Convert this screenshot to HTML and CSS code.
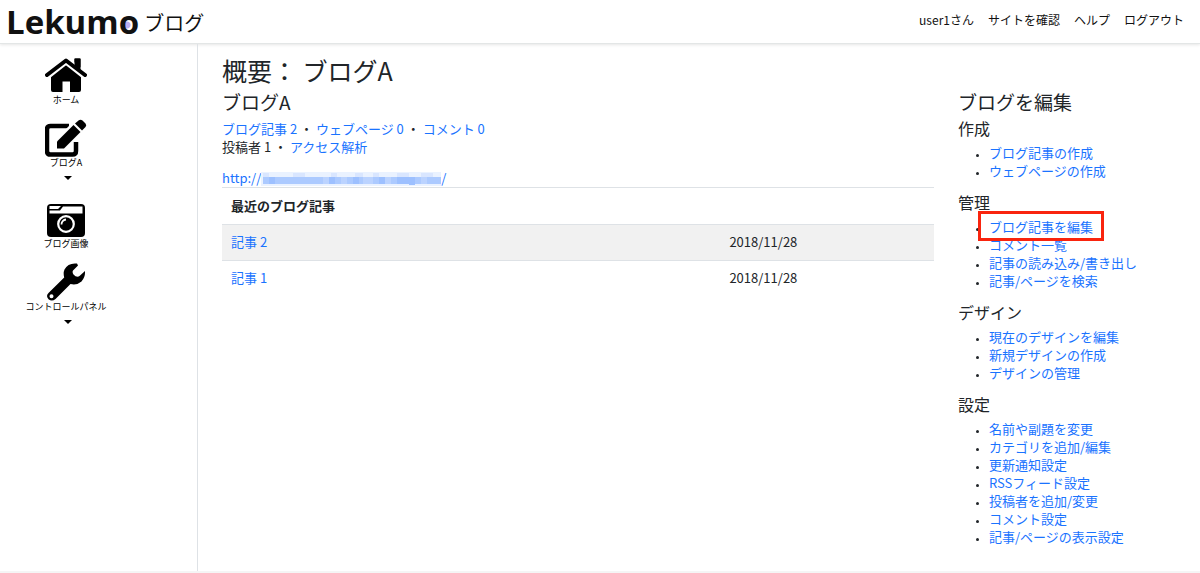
FILE: index.html
```html
<!DOCTYPE html>
<html lang="ja">
<head>
<meta charset="utf-8">
<title>Lekumo ブログ</title>
<link rel="stylesheet" href="styles.css">
</head>
<body>
<header class="topbar">
  <a class="brand" href="#"><span class="brand-name">Lekumo</span><span class="brand-sub">ブログ</span></a>
  <nav class="topnav">
    <a href="#">user1さん</a>
    <a href="#">サイトを確認</a>
    <a href="#">ヘルプ</a>
    <a href="#">ログアウト</a>
  </nav>
</header>
<div class="layout">
  <nav class="sidebar">
    <a class="side-item" href="#">
      <svg class="side-icon" viewBox="0 0 42 38" aria-hidden="true"><path d="M21 7 36 19.500V34q0 2-2 2H25V25.500H17.500V36H8q-2 0-2-2V19.500Z"/><path d="M29.500 2.500H35.500V16L29.500 11Z"/><path d="M2 19.500 21 4.500 40 19.500" fill="none" stroke-width="7.500" stroke-linejoin="round" class="cut"/><path d="M2 19 21 4.500 40 19" fill="none" stroke="#000" stroke-width="4" stroke-linejoin="round" stroke-linecap="round"/><path d="M29.500 3.500q0-1 1-1h4q1 0 1 1V15l-6-5Z"/></svg>
      <span>ホーム</span>
    </a>
    <a class="side-item" href="#">
      <svg class="side-icon" viewBox="0 0 42 38" aria-hidden="true"><path d="M24 7H5.500Q2 7 2 10.500V32Q2 35.500 5.500 35.500H27.500Q31 35.500 31 32V23" fill="none" stroke="#000" stroke-width="4.500"/><path d="M12 21 29 4 37 12 20 29 12 31Z" fill="#fff" stroke="#fff" stroke-width="3"/><path d="M12 22.500 28.500 6 35.500 13 19 29.500H12Z"/><path d="M30 4.500 33.500 1.500Q35.500 0 37.500 1.500L40.500 4.500Q42 6 40.500 8L37 11.500Z"/></svg>
      <span>ブログA</span>
      <i class="caret"></i>
    </a>
    <a class="side-item" href="#">
      <svg class="side-icon" viewBox="0 0 42 38" aria-hidden="true"><rect x="2" y="4" width="38" height="33" rx="4"/><path d="M4.500 6H16L13 9H4.500ZM4.500 10.500H15L18 6.500H37.500V13.500H4.500Z" fill="#fff"/><circle cx="21" cy="24" r="7.800" fill="none" stroke="#fff" stroke-width="2.200"/><path d="M16.500 24.500A5 5 0 0 1 21 19.500" fill="none" stroke="#fff" stroke-width="1.800"/></svg>
      <span>ブログ画像</span>
    </a>
    <a class="side-item" href="#">
      <svg class="side-icon" viewBox="0 0 42 38" aria-hidden="true"><path fill-rule="evenodd" d="M32 .5Q23-.5 19.500 6.500 18 10 19.200 14.500L3.500 30Q.5 33 3.500 36.300 7 39 10.500 36L25.500 21Q32 22.500 36.500 18.500 40.500 14 40 8L34.500 13Q33 14.200 30.500 13.200L28.500 11.500Q27 9.500 28 7.500L33 2.500ZM6.500 31.300A2 2 0 1 1 6.500 35.300A2 2 0 1 1 6.500 31.300Z"/></svg>
      <span>コントロールパネル</span>
      <i class="caret"></i>
    </a>
  </nav>
  <main class="main">
    <h1>概要： ブログA</h1>
    <div class="columns">
      <section class="overview">
        <h2>ブログA</h2>
        <p><a href="#">ブログ記事 2</a> ・ <a href="#">ウェブページ 0</a> ・ <a href="#">コメント 0</a><br>投稿者 1 ・ <a href="#">アクセス解析</a></p>
        <p class="site"><a href="#">http://<svg class="mosaic" viewBox="0 0 180 14" shape-rendering="crispEdges" aria-hidden="true"><rect width="180" height="14" fill="#eaf2ff"/><path fill="#d9e6ff" d="M2 1H8V6H2ZM32 1H44V6H32ZM70 1H76V6H70ZM94 1H102V6H94ZM112 1H118V6H112ZM136 1H148V6H136ZM160 1H172V6H160Z"/><rect x="2" y="5" width="178" height="7" fill="#accaff"/><path fill="#bbd3ff" d="M62 5H68V12H62ZM80 5H86V12H80ZM102 5H112V12H102ZM124 5H130V12H124ZM160 5H166V12H160Z"/><path fill="#9dc0ff" d="M8 5H14V12H8ZM68 5H74V12H68ZM92 5H98V12H92ZM118 5H124V12H118ZM136 5H148V12H136ZM148 5H154V13H148Z"/></svg>/</a></p>
        <table class="entries">
          <thead><tr><th colspan="2" scope="col">最近のブログ記事</th></tr></thead>
          <tbody>
            <tr><td><a href="#">記事 2</a></td><td class="date">2018/11/28</td></tr>
            <tr><td><a href="#">記事 1</a></td><td class="date">2018/11/28</td></tr>
          </tbody>
        </table>
      </section>
      <aside class="actions">
        <h2>ブログを編集</h2>
        <h3>作成</h3>
        <ul>
          <li><a href="#">ブログ記事の作成</a></li>
          <li><a href="#">ウェブページの作成</a></li>
        </ul>
        <h3>管理</h3>
        <ul>
          <li><a class="marked" href="#">ブログ記事を編集</a></li>
          <li><a href="#">コメント一覧</a></li>
          <li><a href="#">記事の読み込み/書き出し</a></li>
          <li><a href="#">記事/ページを検索</a></li>
        </ul>
        <h3>デザイン</h3>
        <ul>
          <li><a href="#">現在のデザインを編集</a></li>
          <li><a href="#">新規デザインの作成</a></li>
          <li><a href="#">デザインの管理</a></li>
        </ul>
        <h3>設定</h3>
        <ul>
          <li><a href="#">名前や副題を変更</a></li>
          <li><a href="#">カテゴリを追加/編集</a></li>
          <li><a href="#">更新通知設定</a></li>
          <li><a href="#">RSSフィード設定</a></li>
          <li><a href="#">投稿者を追加/変更</a></li>
          <li><a href="#">コメント設定</a></li>
          <li><a href="#">記事/ページの表示設定</a></li>
        </ul>
      </aside>
    </div>
  </main>
</div>
</body>
</html>
```
FILE: styles.css
```css
* { box-sizing: border-box; }
body {
  margin: 0;
  min-height: 100vh;
  display: flex;
  flex-direction: column;
  border-bottom: 2px solid #f5f5f5;
  background: #fff;
  color: #212529;
  font: 13px/18px "Noto Sans CJK JP", sans-serif;
}
a { color: #1a73ff; text-decoration: none; }
h1, h2, h3, p, ul { margin: 0; font-weight: 400; }
.topbar {
  display: flex;
  align-items: center;
  justify-content: space-between;
  height: 44px;
  padding: 0 16px 0 6px;
  border-bottom: 1px solid #e3e6e6;
  box-shadow: 0 1px 3px #0000001a;
}
.brand { display: flex; align-items: center; gap: 5px; color: #111; }
.brand-name {
  background: radial-gradient(circle at 121px 25px, #b9aef0 3px, transparent 4px);
  font: 700 33px/44px "Open Sans", sans-serif;
}
.brand-sub { padding-top: 2px; font-size: 20px; line-height: 30px; }
.topnav { display: flex; gap: 14px; padding-bottom: 3px; font-size: 12px; }
.topnav a { color: #111; }
.layout { flex: 1; display: flex; }
.sidebar {
  flex: none;
  display: flex;
  flex-direction: column;
  align-items: flex-start;
  width: 198px;
  padding-top: 12px;
  border-right: 1px solid #dee2e6;
}
.side-item {
  display: flex;
  flex-direction: column;
  align-items: center;
  width: 132px;
  margin-bottom: 13px;
  color: #000;
  font-size: 9px;
  line-height: 12px;
}
.side-icon { width: 42px; height: 38px; }
.cut { stroke: #fff; }
.caret { margin: 7px 0 7px 4px; border: 4px solid transparent; border-top-color: #000; border-bottom: 0; }
.main { flex: 1; padding: 11px 24px 8px; }
h1 { font-size: 25px; line-height: 30px; color: #212529; }
h2 { font-size: 19px; line-height: 24px; }
h3 { font-size: 16px; line-height: 20px; }
.columns { display: flex; gap: 24px; }
.overview { flex: 1; padding-top: 5px; }
.overview h2 { margin-bottom: 6px; }
.site { margin-top: 13px; }
.mosaic { width: 180px; height: 14px; vertical-align: -3px; }
.entries { width: 100%; border-collapse: collapse; }
.entries th, .entries td { padding: 8px 9px 9px; border-top: 1px solid #dee2e6; text-align: left; }
.entries th { padding: 9px; }
.entries .date { width: 30%; }
.entries tbody tr:first-child { background: #f1f1f1; }
.actions { width: 218px; padding-top: 5px; }
.actions h2 { margin-bottom: 4px; }
.actions h3 { margin-bottom: 6px; }
.actions ul { margin-bottom: 12px; padding-left: 31px; }
.actions li::marker { font-size: 9px; }
.marked { position: relative; }
.marked::after { content: ""; position: absolute; inset: -6px -11px -5px; border: 3px solid #f9240e; }
```
